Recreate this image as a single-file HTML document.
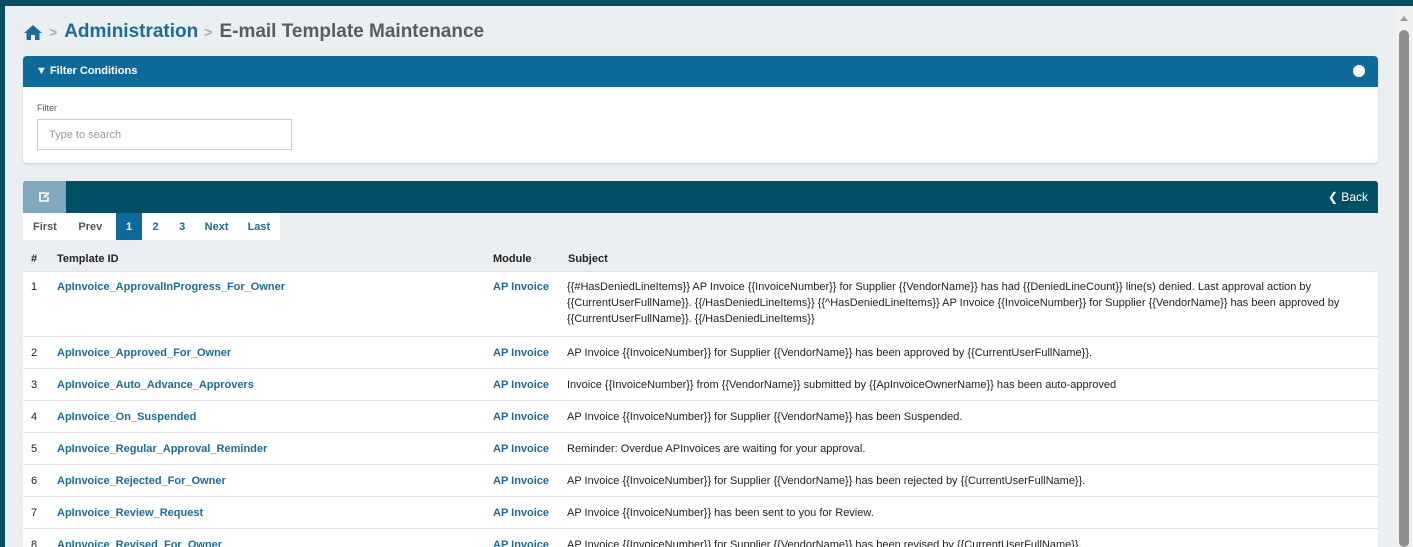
<!DOCTYPE html>
<html style="width:1413px;height:547px;overflow:hidden"><head><meta charset="utf-8"><style>
*{box-sizing:border-box;margin:0;padding:0}
body{width:1413px;height:547px;overflow:hidden;background:#034f66;font-family:"Liberation Sans",sans-serif;position:relative}
.page{position:absolute;left:5px;top:6px;width:1391px;height:541px;background:#eceff1}
.sb{position:absolute;left:1396px;top:6px;width:17px;height:541px;background:#f0f0f0}
.sb .th{position:absolute;left:3px;top:24px;width:10px;height:517px;background:#8f8f8f;border-radius:5px}
.sb .ar{position:absolute;left:4px;top:10px;width:0;height:0;border-left:4px solid transparent;border-right:4px solid transparent;border-bottom:5px solid #999}
.w{position:absolute;left:5px;top:6px;width:1391px;height:541px;overflow:hidden}
.bc{position:absolute;left:18px;top:15px;font-size:19px;font-weight:bold;display:flex;align-items:center}
.bc .a{color:#1a6d99}.bc .b{color:#5b5b5b}.bc .sep{color:#aaa;font-size:14px;margin:0 7px 0 6px}
.fc{position:absolute;left:18px;top:50px;width:1355px;height:107px;background:#fff;border-radius:4px;box-shadow:0 1px 2px rgba(0,0,0,.15)}
.fc .h{height:31px;background:#0f6a9c;border-radius:4px 4px 0 0;color:#fff;font-size:11px;font-weight:bold;padding:9px 0 0 13px}
.fc .dot{position:absolute;right:13px;top:9px;width:12px;height:12px;border-radius:50%;background:#fff}
.fc .lbl{position:absolute;left:14px;top:47px;font-size:9px;color:#555}
.fc .in{position:absolute;left:14px;top:63px;width:255px;height:31px;border:1px solid #ccc;font-size:11px;color:#999;padding:9px 11px}
.tb{position:absolute;left:18px;top:175px;width:1355px;height:32px;background:#034f66;border-radius:3px 3px 0 0}
.tb .ed{position:absolute;left:0;top:0;width:43px;height:32px;background:#7fa8bc;border-radius:3px 0 0 0}
.tb .bk{position:absolute;right:10px;top:9px;color:#fff;font-size:12px}
.pg{position:absolute;left:18px;top:207px;height:27px;width:257px;background:#fff;display:flex;font-size:11px;font-weight:bold;color:#555}
.pg span{padding:8px 0 0;height:27px}
.tbl{position:absolute;left:18px;top:234px;width:1355px;font-size:11px;color:#222}
.hr{height:31px;position:relative;font-weight:bold}
.row{background:#fff;border-bottom:1px solid #e2e2e2;position:relative;height:32px}
.c{position:absolute}
.hr .c{top:13px}
.row .c{top:10px}
.row .sj{top:8px}
.id{left:34px;color:#1a6d99;font-weight:bold}
.md{left:470px;color:#1a6d99;font-weight:bold}
.sj{left:544px;width:780px;line-height:16px}
</style></head><body>
<div class="page"></div>
<div class="sb"><div class="ar"></div><div class="th"></div></div>
<div class="w">
<div class="bc"><svg width="20" height="17" viewBox="0 0 20 17"><path d="M10 1 L19 9 L16.5 9 L16.5 16 L12 16 L12 11 L8 11 L8 16 L3.5 16 L3.5 9 L1 9 Z" fill="#1a6d99"/></svg><span class="sep">&gt;</span><span class="a">Administration</span><span class="sep">&gt;</span><span class="b">E-mail Template Maintenance</span></div>
<div class="fc"><div class="h">▼ Filter Conditions</div><div class="dot"></div><div class="lbl">Filter</div><div class="in">Type to search</div></div>
<div class="tb"><div class="ed"><svg style="position:absolute;left:15px;top:10px" width="12" height="12" viewBox="0 0 12 12"><path d="M9 2H2v8h8V6" fill="none" stroke="#fff" stroke-width="1.6"/><path d="M5 7l1-2 4-4 1.5 1.5-4 4z" fill="#fff"/></svg></div><div class="bk">&#10094; Back</div></div>
<div class="pg"><span style="padding-left:10px;width:48px">First</span><span style="width:46px;padding-left:8px">Prev</span><span style="background:#0f6a9c;color:#fff;width:27px;text-align:center">1</span><span style="width:27px;text-align:center;color:#1a6d99">2</span><span style="width:27px;text-align:center;color:#1a6d99">3</span><span style="width:43px;text-align:center;color:#1a6d99">Next</span><span style="width:43px;text-align:center;color:#1a6d99">Last</span></div>
<div class="tbl">
<div class="hr"><span class="c" style="left:8px">#</span><span class="c" style="left:34px">Template ID</span><span class="c" style="left:470px">Module</span><span class="c" style="left:545px">Subject</span></div>
<div class="row" style="height:66px;border-top:1px solid #e2e2e2"><span class="c" style="left:8px;top:9px">1</span><span class="c id" style="top:9px">ApInvoice_ApprovalInProgress_For_Owner</span><span class="c md" style="top:9px">AP Invoice</span><span class="c sj" style="top:7px">{{#HasDeniedLineItems}} AP Invoice {{InvoiceNumber}} for Supplier {{VendorName}} has had {{DeniedLineCount}} line(s) denied. Last approval action by {{CurrentUserFullName}}. {{/HasDeniedLineItems}} {{^HasDeniedLineItems}} AP Invoice {{InvoiceNumber}} for Supplier {{VendorName}} has been approved by {{CurrentUserFullName}}. {{/HasDeniedLineItems}}</span></div>
<div class="row"><span class="c" style="left:8px">2</span><span class="c id">ApInvoice_Approved_For_Owner</span><span class="c md">AP Invoice</span><span class="c sj">AP Invoice {{InvoiceNumber}} for Supplier {{VendorName}} has been approved by {{CurrentUserFullName}}.</span></div>
<div class="row"><span class="c" style="left:8px">3</span><span class="c id">ApInvoice_Auto_Advance_Approvers</span><span class="c md">AP Invoice</span><span class="c sj">Invoice {{InvoiceNumber}} from {{VendorName}} submitted by {{ApInvoiceOwnerName}} has been auto-approved</span></div>
<div class="row"><span class="c" style="left:8px">4</span><span class="c id">ApInvoice_On_Suspended</span><span class="c md">AP Invoice</span><span class="c sj">AP Invoice {{InvoiceNumber}} for Supplier {{VendorName}} has been Suspended.</span></div>
<div class="row"><span class="c" style="left:8px">5</span><span class="c id">ApInvoice_Regular_Approval_Reminder</span><span class="c md">AP Invoice</span><span class="c sj">Reminder: Overdue APInvoices are waiting for your approval.</span></div>
<div class="row"><span class="c" style="left:8px">6</span><span class="c id">ApInvoice_Rejected_For_Owner</span><span class="c md">AP Invoice</span><span class="c sj">AP Invoice {{InvoiceNumber}} for Supplier {{VendorName}} has been rejected by {{CurrentUserFullName}}.</span></div>
<div class="row"><span class="c" style="left:8px">7</span><span class="c id">ApInvoice_Review_Request</span><span class="c md">AP Invoice</span><span class="c sj">AP Invoice {{InvoiceNumber}} has been sent to you for Review.</span></div>
<div class="row"><span class="c" style="left:8px">8</span><span class="c id">ApInvoice_Revised_For_Owner</span><span class="c md">AP Invoice</span><span class="c sj">AP Invoice {{InvoiceNumber}} for Supplier {{VendorName}} has been revised by {{CurrentUserFullName}}.</span></div>
</div>
</div>
</body></html>
